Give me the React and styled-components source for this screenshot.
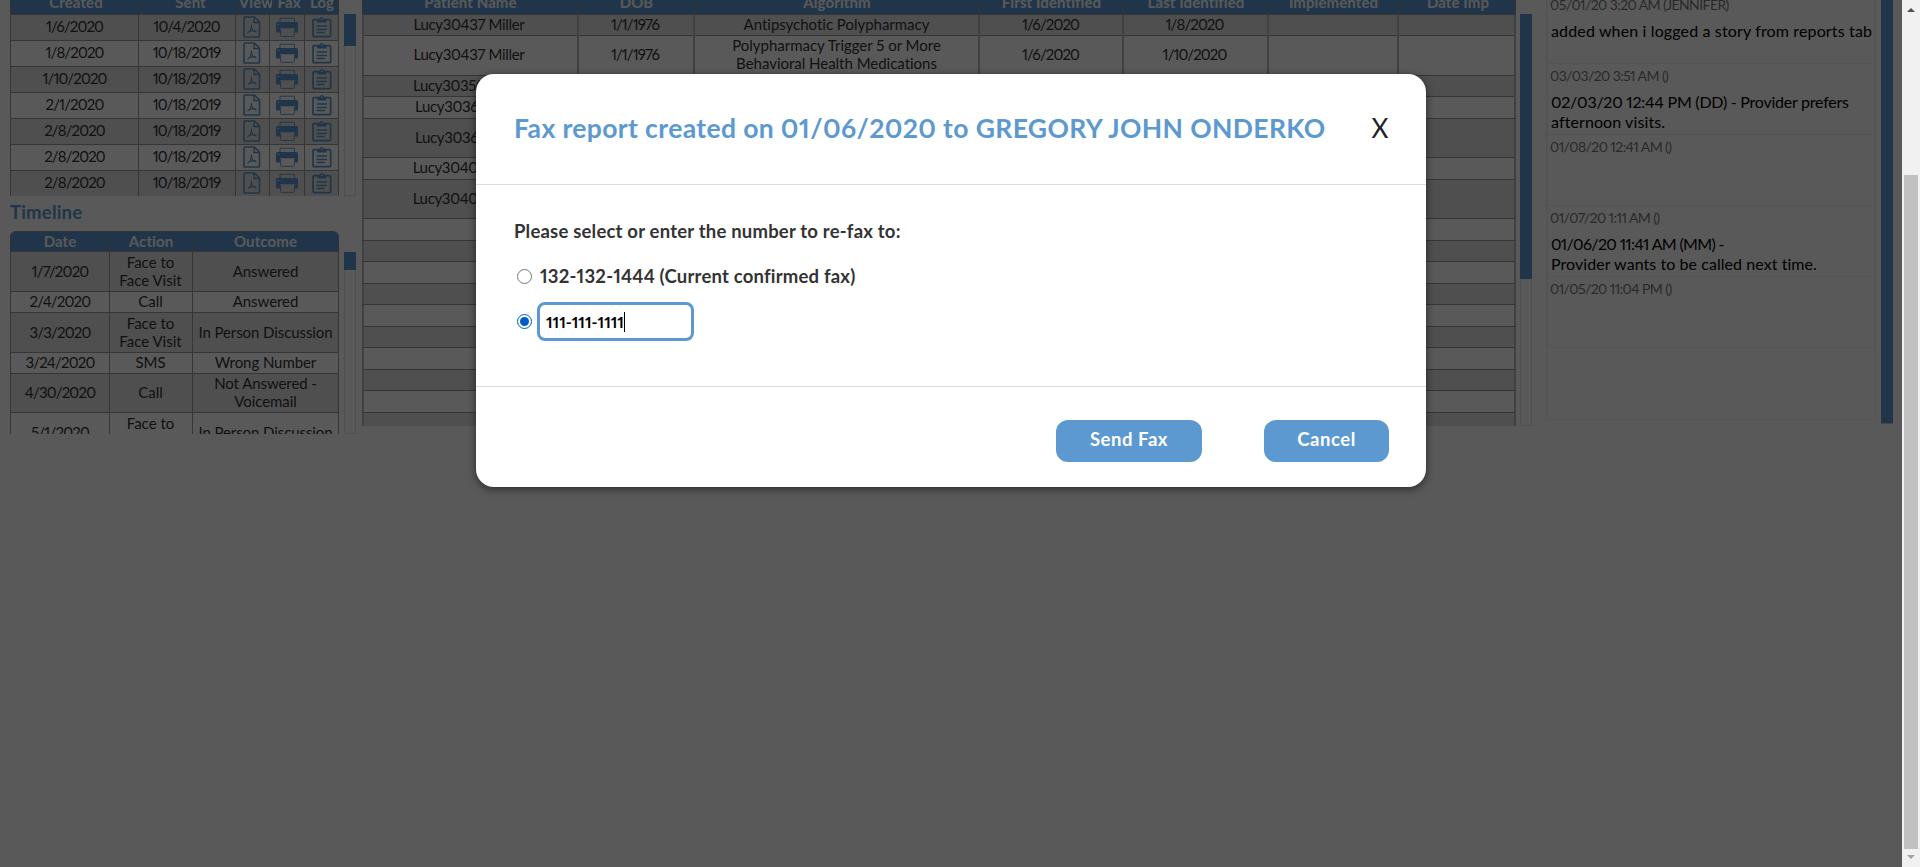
import React from 'react';
import styled, { createGlobalStyle, css } from 'styled-components';

const BLUE = '#5c99d0';

const GlobalStyle = createGlobalStyle`
  *, *::before, *::after { box-sizing: border-box; }
  body {
    margin: 0;
    overflow: hidden;
    background: #fff;
    color: #333;
    font-family: Lato, "Liberation Sans", sans-serif;
    font-feature-settings: "pnum";
    font-variant-ligatures: none;
  }
`;

/* ---------- Page shell ---------- */

const Shell = styled.div`
  display: flex;
  height: 867px;
`;

const Viewport = styled.div`
  position: relative;
  width: 1902px;
  height: 867px;
  overflow: hidden;
`;

const Columns = styled.div`
  display: flex;
  align-items: flex-start;
`;

const LeftColumn = styled.div`
  display: flex;
  flex-direction: column;
  width: 346px;
  margin-left: 10px;
`;

const ScrollArea = styled.div`
  display: flex;
  gap: ${(p) => p.$gap}px;
  height: ${(p) => p.$height}px;
  overflow: hidden;
`;

const Rail = styled.div`
  flex: none;
  width: 12px;
  height: ${(p) => p.$height}px;
  margin-top: ${(p) => p.$top}px;
  border: 1px solid #e2e2e2;
  border-top: 0;
`;

const RailThumb = styled.div`
  width: 12px;
  height: ${(p) => p.$height}px;
  margin-left: -1px;
  background: ${BLUE};
`;

/* ---------- Tables ---------- */

const Table = styled.div`
  flex: none;
  width: ${(p) => p.$width}px;
  margin-top: ${(p) => p.$top || 0}px;
  line-height: 18px;
  font-size: 15px;
`;

const HeaderRow = styled.div`
  display: grid;
  grid-template-columns: ${(p) => p.$columns};
  height: ${(p) => p.$height}px;
  overflow: hidden;
  border: 1px solid #909090;
  border-bottom: 0;
  border-radius: ${(p) => (p.$rounded ? '6px 6px 0 0' : 0)};
  background: ${BLUE};
`;

const HeaderCell = styled.div`
  display: flex;
  align-items: center;
  justify-content: center;
  padding-bottom: 4px;
  color: #fff;
  font-weight: 700;
  letter-spacing: 0.1px;
  white-space: nowrap;
  & + & { border-left: 1px solid #909090; }
`;

const Row = styled.div`
  display: grid;
  grid-template-columns: ${(p) => p.$columns};
  height: ${(p) => p.$height}px;
  border-top: 1px solid #9c9c9c;
  background: #fff;
  &:nth-child(even) { background: #e2e2e2; }
`;

const thinRule = css`
  border-left: 1px solid #9c9c9c;
  &:last-child { border-right: 1px solid #9c9c9c; }
`;

const wideRule = css`
  border-left: 2px solid #bababa;
  &:last-child { border-right: 2px solid #bababa; }
`;

const Cell = styled.div`
  display: flex;
  align-items: center;
  justify-content: center;
  padding-bottom: ${(p) => p.$lift || 0}px;
  padding-right: ${(p) => p.$nudge || 0}px;
  text-align: center;
  white-space: pre-line;
  letter-spacing: ${(p) => p.$track || 0}px;
  ${(p) => (p.$wide ? wideRule : thinRule)}
`;

const SectionTitle = styled.h2`
  margin: 0;
  height: 35px;
  padding-top: 4px;
  color: ${BLUE};
  font-size: 18.5px;
  line-height: 24px;
  letter-spacing: 0.2px;
`;

/* ---------- Comments ---------- */

const Comments = styled.div`
  display: flex;
  gap: 5px;
  height: 424px;
  margin-left: 14px;
  overflow: hidden;
`;

const CommentList = styled.div`
  width: 330px;
  height: 420px;
  overflow: hidden;
  border: 1px solid #f0f0f0;
  border-top: 0;
`;

const Comment = styled.div`
  height: 71px;
  border: 1px solid #f0f0f0;
  border-top: 0;
  &:first-child { margin-top: -7px; }
`;

const Stamp = styled.div`
  height: 28px;
  padding-left: 2px;
  color: #777;
  font-size: 14px;
  line-height: 24px;
  letter-spacing: -0.58px;
  white-space: nowrap;
`;

const CommentLine = styled.div`
  padding-left: 3px;
  color: #000;
  font-size: 16px;
  line-height: 20px;
  white-space: nowrap;
  letter-spacing: ${(p) => p.$track}px;
`;

const CommentRail = styled.div`
  width: 12px;
  height: 424px;
  border-bottom: 1px solid #ccc;
  background: ${BLUE};
`;

/* ---------- Window scrollbar ---------- */

const WindowScrollbar = styled.div`
  display: flex;
  flex-direction: column;
  align-items: center;
  justify-content: space-between;
  width: 18px;
  background: #f1f1f1;
`;

const WindowThumb = styled.div`
  width: 14px;
  height: 674px;
  margin-top: 157px;
  background: #c1c1c1;
`;

const ArrowBox = styled.div`
  display: flex;
  justify-content: center;
  height: 18px;
`;

/* ---------- Modal ---------- */

const Overlay = styled.div`
  position: absolute;
  inset: 0;
  display: flex;
  align-items: flex-start;
  justify-content: center;
  padding-top: 74px;
  background: rgba(0, 0, 0, 0.65);
`;

const Modal = styled.div`
  width: 950px;
  height: 413px;
  border-radius: 18px;
  background: #fff;
  box-shadow: 0 2px 8px rgba(0, 0, 0, 0.55);
`;

const ModalHeader = styled.div`
  display: flex;
  align-items: flex-start;
  justify-content: space-between;
  height: 111px;
  padding: 38px 37px 0 38px;
  border-bottom: 1px solid #dcdcdc;
`;

const ModalTitle = styled.h1`
  margin: 0;
  color: ${BLUE};
  font-size: 26.5px;
  line-height: 32px;
  letter-spacing: 0.37px;
  white-space: nowrap;
`;

const CloseButton = styled.button`
  width: 18px;
  padding: 0;
  border: 0;
  background: none;
  color: #222;
  font-family: inherit;
  font-size: 26px;
  line-height: 32px;
`;

const ModalBody = styled.div`
  display: flex;
  flex-direction: column;
  height: 202px;
  padding: 34px 38px 0;
  border-bottom: 1px solid #dcdcdc;
  font-size: 18.5px;
  font-weight: 700;
  line-height: 24px;
  letter-spacing: 0.2px;
`;

const Choice = styled.label`
  display: flex;
  align-items: center;
  gap: ${(p) => p.$gap}px;
  height: ${(p) => p.$height}px;
  margin-top: ${(p) => p.$top}px;
  padding-left: 3px;
`;

const Radio = styled.span`
  display: flex;
  align-items: center;
  justify-content: center;
  width: 15px;
  height: 15px;
  border: 1px solid ${(p) => (p.$checked ? '#005cc8' : '#767676')};
  border-radius: 50%;
  &::after {
    content: '';
    width: 9px;
    height: 9px;
    border-radius: 50%;
    background: ${(p) => (p.$checked ? '#005cc8' : 'transparent')};
  }
`;

const NumberField = styled.div`
  display: flex;
  align-items: center;
  width: 157px;
  height: 39px;
  padding: 0 0 0 6px;
  border: 3.5px solid ${BLUE};
  border-radius: 8px;
  color: #000;
  font-size: 16px;
  letter-spacing: 0;
`;

const Caret = styled.span`
  width: 1px;
  height: 20px;
  background: #000;
`;

const ModalFooter = styled.div`
  display: flex;
  justify-content: flex-end;
  gap: 62px;
  padding: 33px 37px 0 0;
`;

const ActionButton = styled.button`
  width: ${(p) => p.$width}px;
  height: 42px;
  padding: 0 0 4px;
  border: 0;
  border-radius: 12px;
  background: ${BLUE};
  color: #fff;
  font-family: inherit;
  font-size: 18.5px;
  font-weight: 700;
  letter-spacing: 0.55px;
`;

/* ---------- Icons ---------- */

const PdfIcon = () => (
  <svg width="18" height="22" viewBox="0 0 18 22" fill="none" stroke={BLUE}>
    <path d="M2 1H11.5L16.5 6V20.2Q16.5 21 15.7 21H1.8Q1 21 1 20.2V2Q1 1 2 1Z" strokeWidth="1.6" />
    <path d="M11 1V6.5H16.5" strokeWidth="1.4" />
    <path d="M4.6 17.4C6.6 15.8 8.6 12.6 8.4 8.8M8.4 10.8C9 13 10.4 15.4 13.4 16M5.2 16C7.8 14.6 10.5 14.2 13.4 15" strokeWidth="1.1" />
  </svg>
);

const PrinterIcon = () => (
  <svg width="22" height="21" viewBox="0 0 22 21" fill="none">
    <path d="M4 5.5V1.2H18.5V5.5" stroke={BLUE} strokeWidth="0.9" />
    <path d="M1.5 5H20.5Q22 5 22 6.5V14.8Q22 15.6 21 15.6H18.8V11.2H4V15.6H1Q0 15.6 0 14.8V6.5Q0 5 1.5 5Z" fill={BLUE} />
    <circle cx="2.3" cy="7.4" r="0.7" fill="#fff" />
    <path d="M4.5 12V18.6Q4.5 19.4 5.3 19.4H17.6Q18.4 19.4 18.4 18.6V12" stroke={BLUE} strokeWidth="0.9" />
  </svg>
);

const LogIcon = () => (
  <svg width="20" height="22" viewBox="0 0 20 22" fill="none" stroke={BLUE}>
    <rect x="1" y="3.6" width="17.6" height="17" rx="1" strokeWidth="1.7" />
    <path d="M5.2 3H7.5Q8 1 9.8 1T12.1 3H14.4V6.4H5.2Z" fill={BLUE} stroke="none" />
    <circle cx="9.8" cy="3.1" r="0.8" fill="#fff" stroke="none" />
    <path d="M4.6 10H15M4.6 13.4H15M4.6 16.6H12.8" strokeWidth="1.5" />
  </svg>
);

/* ---------- Data ---------- */

const REPORT_HEAD_COLUMNS = '130px 98px 33px 33px 33px';
const REPORT_COLUMNS = '128px 97px 34px 35px 35px';
const reports = [
  ['1/6/2020', '10/4/2020'],
  ['1/8/2020', '10/18/2019'],
  ['1/10/2020', '10/18/2019'],
  ['2/1/2020', '10/18/2019'],
  ['2/8/2020', '10/18/2019'],
  ['2/8/2020', '10/18/2019'],
  ['2/8/2020', '10/18/2019'],
];

const TIMELINE_HEAD_COLUMNS = '98px 83px 146px';
const TIMELINE_COLUMNS = '99px 83px 147px';
const timeline = [
  ['1/7/2020', 'Face to\nFace Visit', 'Answered', 40],
  ['2/4/2020', 'Call', 'Answered', 21],
  ['3/3/2020', 'Face to\nFace Visit', 'In Person Discussion', 40],
  ['3/24/2020', 'SMS', 'Wrong Number', 21],
  ['4/30/2020', 'Call', 'Not Answered -\nVoicemail', 39],
  ['5/1/2020', 'Face to\nFace Visit', 'In Person Discussion', 40],
];

const PATIENT_COLUMNS = '215px 116px 285px 144px 145px 130px 119px';
const patientHeads = ['Patient Name', 'DOB', 'Algorithm', 'First Identified', 'Last Identified', 'Implemented', 'Date Imp'];
const patients = [
  [21, 'Lucy30437 Miller', '1/1/1976', 'Antipsychotic Polypharmacy', '1/6/2020', '1/8/2020'],
  [40, 'Lucy30437 Miller', '1/1/1976', 'Polypharmacy Trigger 5 or More\nBehavioral Health Medications', '1/6/2020', '1/10/2020'],
  [21, 'Lucy30350 Miller'],
  [22, 'Lucy30361 Miller'],
  [39, 'Lucy30361 Miller'],
  [22, 'Lucy30402 Miller'],
  [39, 'Lucy30402 Miller'],
  [22], [21], [22], [21], [22], [21], [22], [21], [22], [20],
];

const comments = [
  { stamp: '05/01/20 3:20 AM (JENNIFER)', lines: [['added when i logged a story from reports tab', 0.14]] },
  { stamp: '03/03/20 3:51 AM ()', lines: [['02/03/20 12:44 PM (DD) - Provider prefers', -0.24], ['afternoon visits.', 0.1]] },
  { stamp: '01/08/20 12:41 AM ()', lines: [] },
  { stamp: '01/07/20 1:11 AM ()', lines: [['01/06/20 11:41 AM (MM) -', -0.66], ['Provider wants to be called next time.', 0.06]] },
  { stamp: '01/05/20 11:04 PM ()', lines: [] },
];

/* ---------- Sections ---------- */

const ReportsTable = () => (
  <ScrollArea $gap={5} $height={196}>
    <Table $width={329} $top={-8}>
      <HeaderRow $columns={REPORT_HEAD_COLUMNS} $height={22}>
        {['Created', 'Sent', 'View', 'Fax', 'Log'].map((h) => <HeaderCell key={h}>{h}</HeaderCell>)}
      </HeaderRow>
      {reports.map(([created, sent], i) => (
        <Row key={i} $columns={REPORT_COLUMNS} $height={26}>
          <Cell $track={-0.86} $lift={4}>{created}</Cell>
          <Cell $track={-0.89} $lift={4} $nudge={1}>{sent}</Cell>
          <Cell $lift={1} $nudge={1}><PdfIcon /></Cell>
          <Cell $lift={1} $nudge={1}><PrinterIcon /></Cell>
          <Cell $lift={1}><LogIcon /></Cell>
        </Row>
      ))}
    </Table>
    <Rail $top={14} $height={182}><RailThumb $height={32} /></Rail>
  </ScrollArea>
);

const TimelineTable = () => (
  <ScrollArea $gap={5} $height={203}>
    <Table $width={329}>
      <HeaderRow $columns={TIMELINE_HEAD_COLUMNS} $height={20} $rounded>
        {['Date', 'Action', 'Outcome'].map((h) => <HeaderCell key={h}>{h}</HeaderCell>)}
      </HeaderRow>
      {timeline.map(([date, action, outcome, height]) => (
        <Row key={date} $columns={TIMELINE_COLUMNS} $height={height}>
          <Cell $track={-0.8} $lift={2}>{date}</Cell>
          <Cell $lift={2} $nudge={1}>{action}</Cell>
          <Cell $track={-0.08} $lift={2}>{outcome}</Cell>
        </Row>
      ))}
    </Table>
    <Rail $top={21} $height={182}><RailThumb $height={18} /></Rail>
  </ScrollArea>
);

const PatientsArea = styled(ScrollArea)`
  margin-left: 6px;
`;

const PatientsTable = () => (
  <PatientsArea $gap={4} $height={426}>
    <Table $width={1154} $top={-8}>
      <HeaderRow $columns={PATIENT_COLUMNS} $height={22}>
        {patientHeads.map((h) => <HeaderCell key={h}>{h}</HeaderCell>)}
      </HeaderRow>
      {patients.map(([height, name, dob, algorithm, first, last], i) => (
        <Row key={i} $columns={PATIENT_COLUMNS} $height={height}>
          <Cell $wide $lift={3} $nudge={3} $track={-0.34}>{name}</Cell>
          <Cell $wide $lift={3} $nudge={2} $track={-0.9}>{dob}</Cell>
          <Cell $wide $lift={3} $track={-0.02}>{algorithm}</Cell>
          <Cell $wide $lift={3} $nudge={1} $track={-0.86}>{first}</Cell>
          <Cell $wide $lift={3} $nudge={2} $track={-0.9}>{last}</Cell>
          <Cell $wide />
          <Cell $wide />
        </Row>
      ))}
    </Table>
    <Rail $top={14} $height={412}><RailThumb $height={265} /></Rail>
  </PatientsArea>
);

const CommentPanel = () => (
  <Comments>
    <CommentList>
      {comments.map(({ stamp, lines }) => (
        <Comment key={stamp}>
          <Stamp>{stamp}</Stamp>
          {lines.map(([text, track]) => <CommentLine key={text} $track={track}>{text}</CommentLine>)}
        </Comment>
      ))}
    </CommentList>
    <CommentRail />
  </Comments>
);

const FaxModal = () => (
  <Overlay>
    <Modal role="dialog">
      <ModalHeader>
        <ModalTitle>Fax report created on 01/06/2020 to GREGORY JOHN ONDERKO</ModalTitle>
        <CloseButton>X</CloseButton>
      </ModalHeader>
      <ModalBody>
        Please select or enter the number to re-fax to:
        <Choice $gap={8} $height={24} $top={21}>
          <Radio />132-132-1444 (Current confirmed fax)
        </Choice>
        <Choice $gap={5} $height={39} $top={14}>
          <Radio $checked />
          <NumberField>111-111-1111<Caret /></NumberField>
        </Choice>
      </ModalBody>
      <ModalFooter>
        <ActionButton $width={146}>Send Fax</ActionButton>
        <ActionButton $width={125}>Cancel</ActionButton>
      </ModalFooter>
    </Modal>
  </Overlay>
);

export default function App() {
  return (
    <Shell>
      <GlobalStyle />
      <Viewport>
        <Columns>
          <LeftColumn>
            <ReportsTable />
            <SectionTitle>Timeline</SectionTitle>
            <TimelineTable />
          </LeftColumn>
          <PatientsTable />
          <CommentPanel />
        </Columns>
        <FaxModal />
      </Viewport>
      <WindowScrollbar>
        <ArrowBox>
          <svg width="18" height="18" viewBox="0 0 18 18"><path d="M5 12L9 8L13 12Z" fill="#505050" /></svg>
        </ArrowBox>
        <WindowThumb />
        <ArrowBox>
          <svg width="18" height="18" viewBox="0 0 18 18"><path d="M5 6L9 10L13 6Z" fill="#a3a3a3" /></svg>
        </ArrowBox>
      </WindowScrollbar>
    </Shell>
  );
}
